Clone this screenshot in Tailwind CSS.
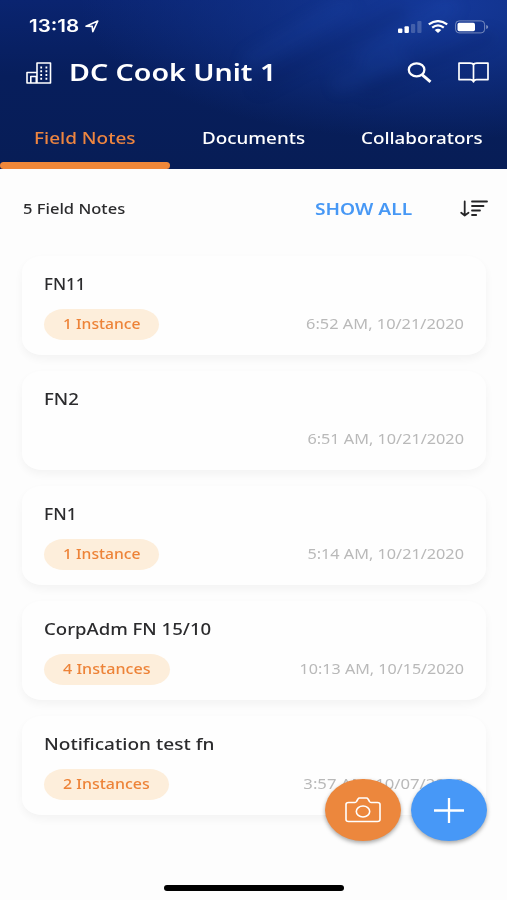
<!DOCTYPE html>
<html lang="en">
<head>
<meta charset="utf-8">
<title>DC Cook Unit 1</title>
<script src="https://cdn.jsdelivr.net/npm/@tailwindcss/browser@4"></script>
</head>
<body class="bg-[#fdfdfd]">
<div class="relative flex h-[900px] w-[507px] flex-col overflow-hidden bg-[#fdfdfd] font-['Noto_Sans',sans-serif] whitespace-nowrap text-[#2b2b2d]">
  <header class="relative h-[169px] shrink-0 overflow-hidden bg-linear-to-b from-[#0a2470] via-[#071e5c] via-45% to-[#071d56] text-white">
    <div class="absolute inset-0 bg-[radial-gradient(ellipse_360px_135px_at_440px_5px,#15399a_0%,#12348faa_45%,transparent_100%)]"></div>
    <svg class="absolute inset-0 h-[169px] w-[507px] blur-[7px]" viewBox="0 0 507 169" fill="none" stroke-linecap="round"><path d="M250 60 345 5M365 58 450 8M340 84 400 60" stroke="#2d62d0" stroke-opacity=".09" stroke-width="18"/><path d="M260 85 400 12M370 90 490 38" stroke="#04143f" stroke-opacity=".12" stroke-width="14"/></svg>
    <div class="relative flex h-[53px] items-center pl-[29px] pr-[18px]">
      <span class="w-[51px] origin-left scale-x-[1.21] font-['Inter',sans-serif] text-[17px] font-semibold">13:18</span>
      <svg class="ml-[5px] h-[13px] w-[14px]" viewBox="0 0 14 13" fill="none" stroke="#fff" stroke-width="1.6" stroke-linejoin="round"><path d="M1 6.2 12.8 1 7.8 11.6 7.2 6.4Z"/></svg>
      <svg class="ml-auto h-[12px] w-[24px]" viewBox="0 0 24 12"><g fill="#fff"><rect x="0" y="7.5" width="4.4" height="4.5" rx="1"/><rect x="6.5" y="5.2" width="4.4" height="6.8" rx="1"/></g><g fill="#fff" opacity=".2"><rect x="13" y="3" width="4.2" height="9" rx="1"/><rect x="19.3" y="0" width="4.2" height="12" rx="1"/></g></svg>
      <svg class="ml-[6px] h-[13px] w-[20px]" viewBox="0 0 20 13" fill="none" stroke="#fff" stroke-width="2.3"><path d="M.8 4.4Q10-2.1 19.2 4.4M4.2 7.6Q10 3.1 15.8 7.6"/><path d="M6.7 10Q10 7.5 13.3 10L10 13Z" fill="#fff" stroke="none"/></svg>
      <svg class="ml-[7px] h-[14px] w-[34px]" viewBox="0 0 34 14"><rect x=".6" y=".9" width="29" height="12" rx="3.5" fill="none" stroke="#fff" stroke-opacity=".42"/><rect x="2.5" y="2.7" width="17.5" height="8.5" rx="1.7" fill="#fff"/><path d="M31.2 5v4q2-.7 2-2t-2-2Z" fill="#fff" opacity=".45"/></svg>
    </div>
    <div class="relative flex h-[39px] items-center pl-[26px] pr-[18px]">
      <svg class="h-[22px] w-[26px]" viewBox="0 0 26 22" fill="none" stroke="#fff" stroke-width="1.6" stroke-linejoin="round"><path d="M1 21V10.5h10V1h13.5v20ZM11 10.5V21M4.8 21v-6.5h5.5V21"/><path d="M14.3 5.5h1.8m3.4 0h1.8M14.3 9.2h1.8m3.4 0h1.8M14.3 13h1.8m3.4 0h1.8M14.3 16.7h1.8m3.4 0h1.8" stroke-width="1.9"/></svg>
      <h1 class="-mt-[2px] ml-[17px] w-[210px] origin-left scale-x-[1.19] text-[24px] leading-[30px] font-semibold">DC Cook Unit 1</h1>
      <svg class="ml-auto h-[21px] w-[25px]" viewBox="0 0 25 21" fill="none" stroke="#fff" stroke-width="2.3"><ellipse cx="9.6" cy="7.8" rx="7.8" ry="6.5"/><path d="m15 12.6 8.5 7.2" stroke-width="2.9"/></svg>
      <svg class="ml-[26px] h-[21px] w-[31px]" viewBox="0 0 31 21" fill="none" stroke="#fff" stroke-width="1.7" stroke-linejoin="round"><path d="M15.5 3Q15 1.2 12 1.2H1v16.4h11.5q2.5 0 3 2.2.5-2.2 3-2.2H30V1.2H19q-3 0-3.5 1.8v16"/></svg>
    </div>
    <nav class="relative flex h-[77px] text-[16.5px] leading-[24px] font-medium">
      <div class="w-[169px] pt-[34px] pl-[34px] text-[#ed8540]"><span class="inline-block origin-left scale-x-[1.15]">Field Notes</span></div>
      <div class="w-[169px] pt-[34px] pl-[33px]"><span class="inline-block origin-left scale-x-[1.14]">Documents</span></div>
      <div class="w-[169px] pt-[34px] pl-[23px]"><span class="inline-block origin-left scale-x-[1.14]">Collaborators</span></div>
      <div class="absolute bottom-0 left-0 h-[7px] w-[170px] rounded-full bg-[#ef8739]"></div>
    </nav>
  </header>
  <section class="flex h-[80px] shrink-0 items-center pl-[23px] pr-[19px]">
    <span class="-mt-[2px] origin-left scale-x-[1.18] text-[14px] font-medium">5 Field Notes</span>
    <span class="ml-auto w-[97px] origin-left scale-x-[1.2] text-[16px] font-semibold text-[#4798f5]">SHOW ALL</span>
    <svg class="ml-[48px] h-[18px] w-[28px]" viewBox="0 0 28 18" fill="none" stroke="#252527" stroke-width="1.8" stroke-linecap="round" stroke-linejoin="round"><path d="M4.7 1.5v14M1.200 12.800l3.500 2.700 3.800-2.700M12 1.500h15M12 6h11.500M12 10.500h8M12 15h4.200"/></svg>
  </section>
  <main class="flex flex-col gap-4 px-[22px] pr-[21px] pt-[7px]">
    <article class="flex h-[99px] flex-col rounded-[20px/16px] bg-[#fefefe] px-[22px] pt-[16px] shadow-[0_4px_9px_rgba(0,0,0,0.045)]">
      <h2 class="origin-left scale-x-[1.06] self-start text-[16px] leading-[24px] font-medium">FN11</h2>
      <div class="mt-[13px] flex h-[31px] items-center justify-between"><span class="h-full w-[115px] rounded-[20px/16px] bg-[#fdeedb] pl-[19px] text-[14px] leading-[30px] font-medium text-[#ed8338]"><span class="inline-block origin-left scale-x-[1.12]">1 Instance</span></span><time class="-mt-[3px] origin-right scale-x-[1.17] text-[14px] text-[#b9b9b9]">6:52 AM, 10/21/2020</time></div>
    </article>
    <article class="flex h-[99px] flex-col rounded-[20px/16px] bg-[#fefefe] px-[22px] pt-[16px] shadow-[0_4px_9px_rgba(0,0,0,0.045)]">
      <h2 class="origin-left scale-x-[1.16] self-start text-[16px] leading-[24px] font-medium">FN2</h2>
      <div class="mt-[13px] flex h-[31px] items-center justify-end"><time class="-mt-[3px] origin-right scale-x-[1.16] text-[14px] text-[#b9b9b9]">6:51 AM, 10/21/2020</time></div>
    </article>
    <article class="flex h-[99px] flex-col rounded-[20px/16px] bg-[#fefefe] px-[22px] pt-[16px] shadow-[0_4px_9px_rgba(0,0,0,0.045)]">
      <h2 class="origin-left scale-x-[1.09] self-start text-[16px] leading-[24px] font-medium">FN1</h2>
      <div class="mt-[13px] flex h-[31px] items-center justify-between"><span class="h-full w-[115px] rounded-[20px/16px] bg-[#fdeedb] pl-[19px] text-[14px] leading-[30px] font-medium text-[#ed8338]"><span class="inline-block origin-left scale-x-[1.12]">1 Instance</span></span><time class="-mt-[3px] origin-right scale-x-[1.16] text-[14px] text-[#b9b9b9]">5:14 AM, 10/21/2020</time></div>
    </article>
    <article class="flex h-[99px] flex-col rounded-[20px/16px] bg-[#fefefe] px-[22px] pt-[16px] shadow-[0_4px_9px_rgba(0,0,0,0.045)]">
      <h2 class="origin-left scale-x-[1.16] self-start text-[16px] leading-[24px] font-medium">CorpAdm FN 15/10</h2>
      <div class="mt-[13px] flex h-[31px] items-center justify-between"><span class="h-full w-[126px] rounded-[20px/16px] bg-[#fdeedb] pl-[19px] text-[14px] leading-[30px] font-medium text-[#ed8338]"><span class="inline-block origin-left scale-x-[1.15]">4 Instances</span></span><time class="-mt-[3px] origin-right scale-x-[1.15] text-[14px] text-[#b9b9b9]">10:13 AM, 10/15/2020</time></div>
    </article>
    <article class="flex h-[99px] flex-col rounded-[20px/16px] bg-[#fefefe] px-[22px] pt-[16px] shadow-[0_4px_9px_rgba(0,0,0,0.045)]">
      <h2 class="origin-left scale-x-[1.19] self-start text-[16px] leading-[24px] font-medium">Notification test fn</h2>
      <div class="mt-[13px] flex h-[31px] items-center justify-between"><span class="h-full w-[125px] rounded-[20px/16px] bg-[#fdeedb] pl-[19px] text-[14px] leading-[30px] font-medium text-[#ed8338]"><span class="inline-block origin-left scale-x-[1.14]">2 Instances</span></span><time class="-mt-[3px] origin-right scale-x-[1.19] text-[14px] text-[#b9b9b9]">3:57 AM, 10/07/2020</time></div>
    </article>
  </main>
  <div class="absolute top-[779px] right-[20px] flex gap-[10px]">
    <button class="flex h-[62px] w-[76px] items-center justify-center rounded-[50%] bg-[#ec873d] shadow-[0_2px_4px_rgba(0,0,0,0.35)]"><svg class="h-[26px] w-[36px]" viewBox="0 0 36 26" fill="none" stroke="#fff" stroke-width="1.6" stroke-linejoin="round"><path d="M3.5 5.5H10q1 0 1.5-1L13 2q.5-1 1.5-1h7q1 0 1.5 1l1.5 2.5q.5 1 1.5 1h6.5q2.5 0 2.5 2v15q0 2-2.5 2h-29Q1 24.5 1 22.5v-15q0-2 2.5-2Z"/><ellipse cx="18" cy="14.5" rx="6.7" ry="5.5"/></svg></button>
    <button class="flex h-[62px] w-[76px] items-center justify-center rounded-[50%] bg-[#4798f7] shadow-[0_2px_4px_rgba(0,0,0,0.35)]"><svg class="h-[25px] w-[30px]" viewBox="0 0 30 25" stroke="#fff" stroke-width="2.3"><path d="M0 12.5h30M15 0v25"/></svg></button>
  </div>
  <div class="absolute top-[885px] left-[164px] h-[6px] w-[180px] rounded-full bg-black"></div>
</div>
</body>
</html>
